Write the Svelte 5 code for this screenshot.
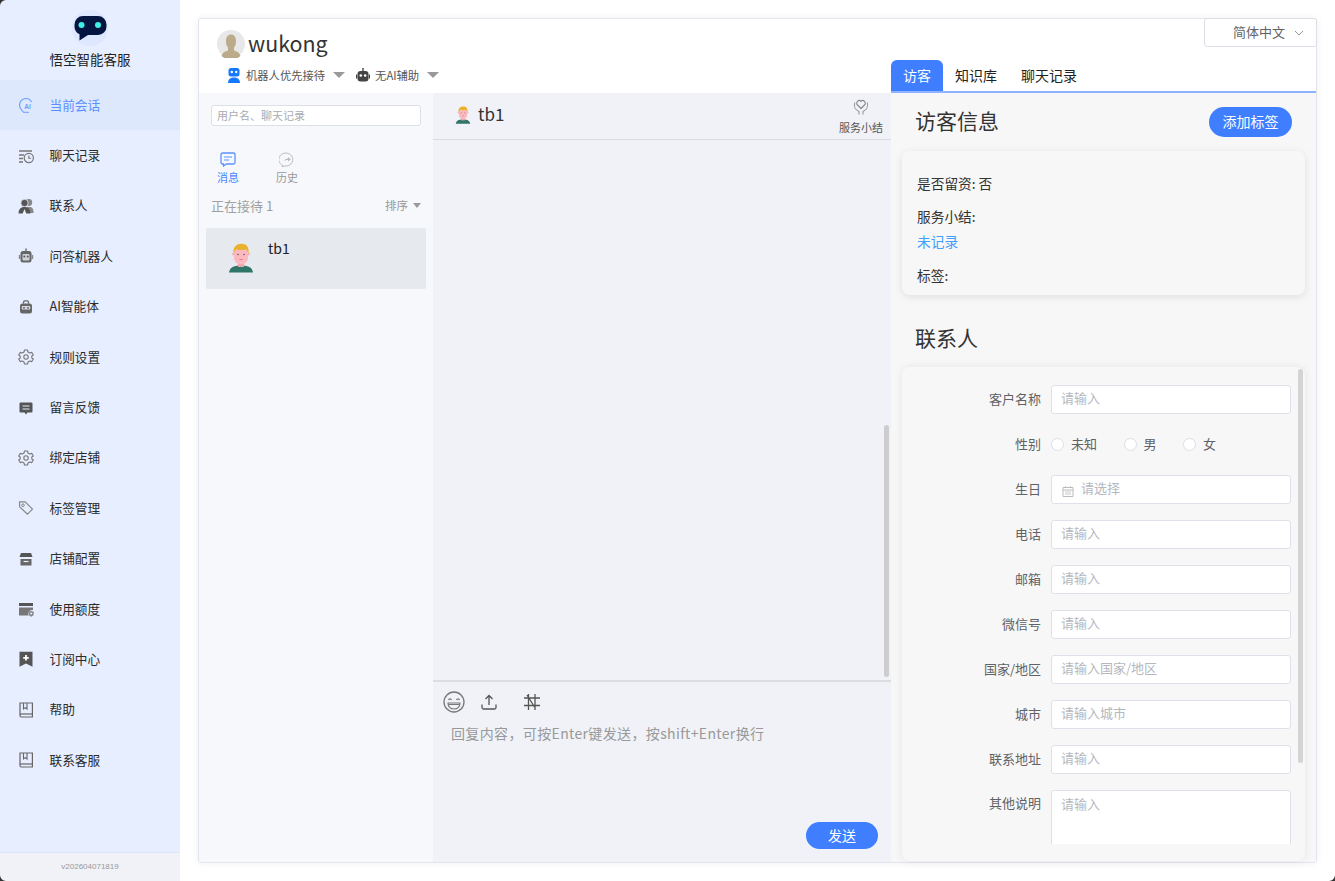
<script>
  const gear = `<path d="M6.5 1H9.5L10 3L11.8 4L13.8 3.4L15.3 6L13.8 7V9L15.3 10L13.8 12.6L11.8 12L10 13L9.5 15H6.5L6 13L4.2 12L2.2 12.6L.7 10L2.2 9V7L.7 6L2.2 3.4L4.2 4L6 3Z" fill="none" stroke="#777" stroke-width="1.1" stroke-linejoin="round"/><circle cx="8" cy="8" r="2.2" fill="none" stroke="#777" stroke-width="1.1"/>`;
  const book = `<path d="M2 1h12.4v14H3.4A1.6 1.6 0 0 1 2 13.4z" fill="none" stroke="#666" stroke-width="1.2"/><path d="M2 12h12.4" stroke="#666" stroke-width="1.2"/><path d="M5.5 1v6l1.8-1.4L9 7V1" fill="none" stroke="#666" stroke-width="1.1"/>`;

  const menu = [
    { name: '当前会话', active: true, icon: `<path d="M5 15c0-1.500-3.500-2.500-3.500-7A6.400 6.400 0 0 1 8 1.500c2.600 0 4.500 1.300 5.500 3.500" fill="none" stroke="#6f9dff" stroke-width="1.200"/><path d="M5 15.300h6" stroke="#6f9dff" stroke-width="1"/><text x="6.200" y="11.500" font-size="6.500" font-weight="700" font-family="Liberation Sans" fill="#6f9dff">AI</text>` },
    { name: '聊天记录', icon: `<path d="M1 3h13M1 7h5M1 10.500h4M1 14h4" stroke="#777" stroke-width="1.300"/><circle cx="10.800" cy="10" r="4.600" fill="none" stroke="#777" stroke-width="1.200"/><path d="M10.800 7.500v2.700h2.200" fill="none" stroke="#777" stroke-width="1.100"/>` },
    { name: '联系人', icon: `<circle cx="10.800" cy="4.500" r="3.400" fill="#888"/><path d="M9 9h3c2.500 0 3.600 2.500 3.600 6H9z" fill="#888"/><circle cx="6.500" cy="5" r="3.700" fill="#555" stroke="#e6eeff" stroke-width=".8"/><path d="M.6 15.500c0-4 1.800-6.500 5.900-6.500s5.900 2.500 5.900 6.500H8.300L6.500 11l-1.800 4.500z" fill="#555"/>` },
    { name: '问答机器人', icon: `<path d="M8 .6v2.400" stroke="#666" stroke-width="1.400"/><rect x="2.500" y="3" width="11" height="11.500" rx="2.500" fill="#666"/><rect x=".8" y="7" width="1.600" height="4" fill="#888"/><rect x="13.600" y="7" width="1.600" height="4" fill="#888"/><rect x="4.500" y="6" width="7" height="6.500" rx="1" fill="#ccd0da"/><circle cx="6.300" cy="8.400" r="1" fill="#555"/><circle cx="9.700" cy="8.400" r="1" fill="#555"/>` },
    { name: 'AI智能体', icon: `<path d="M5.500 4.500V3.200A1.500 1.500 0 0 1 7 1.800h2a1.500 1.500 0 0 1 1.500 1.400v1.300" fill="none" stroke="#666" stroke-width="1.300"/><rect x="2" y="4.500" width="12" height="10" rx="2.500" fill="#666"/><rect x="3.700" y="7" width="8.600" height="3.600" rx="1" fill="#d4d8e2"/><circle cx="6" cy="8.800" r=".9" fill="#555"/><circle cx="10" cy="8.800" r=".9" fill="#555"/>` },
    { name: '规则设置', icon: gear },
    { name: '留言反馈', icon: `<path d="M2.500 2.500h11a1 1 0 0 1 1 1v8a1 1 0 0 1-1 1H9.500L8 14.500 6.500 12.500h-4a1 1 0 0 1-1-1v-8a1 1 0 0 1 1-1z" fill="#555"/><path d="M4.500 6h7M4.500 9h7" stroke="#e6eeff" stroke-width="1.100"/>` },
    { name: '绑定店铺', icon: gear },
    { name: '标签管理', icon: `<path d="M1.500 1.800h5.700l7.300 7.400-5 5-7.800-7.300z" fill="none" stroke="#888" stroke-width="1.200" stroke-linejoin="round"/><circle cx="5" cy="5.200" r="1.300" fill="none" stroke="#888" stroke-width="1"/>` },
    { name: '店铺配置', icon: `<path d="M3 2h10l1.500 4h-13z" fill="#555"/><path d="M2.500 8h11v6.500h-11z" fill="#666"/><path d="M5.500 10.500h5" stroke="#e6eeff" stroke-width="1.200"/>` },
    { name: '使用额度', icon: `<path d="M1 2h14v3H1z" fill="#555"/><path d="M1 6.500h14V9a4 4 0 0 0-4.500 5.500H1z" fill="#777"/><path d="M13.200 9.800l2.500 1v2.400c0 1.200-1.300 2-2.500 2.500-1.200-.5-2.500-1.300-2.500-2.500v-2.400z" fill="#888"/><circle cx="13.200" cy="12.600" r="1" fill="#e6eeff"/>` },
    { name: '订阅中心', icon: `<path d="M1.500.8h13v15L8 12.500 1.500 15.800z" fill="#555"/><path d="M8 4v5.500M5.200 6.800h5.600" stroke="#fff" stroke-width="1.800"/>` },
    { name: '帮助', icon: book },
    { name: '联系客服', icon: book },
  ];

  const fields = [
    { label: '客户名称', ph: '请输入' },
    { label: '性别', radio: ['未知', '男', '女'] },
    { label: '生日', ph: '请选择', date: true },
    { label: '电话', ph: '请输入' },
    { label: '邮箱', ph: '请输入' },
    { label: '微信号', ph: '请输入' },
    { label: '国家/地区', ph: '请输入国家/地区' },
    { label: '城市', ph: '请输入城市' },
    { label: '联系地址', ph: '请输入' },
  ];
</script>

{#snippet person()}
  <svg viewBox="0 0 26 30" class="person" aria-hidden="true">
    <path d="M1 29.500c.6-4.500 4-7 12-7s11.400 2.500 12 7z" fill="#2f7568"/>
    <rect x="10" y="19" width="6" height="5" fill="#f0a5a8"/>
    <circle cx="5.500" cy="11" r="1.600" fill="#f9b3b8"/>
    <circle cx="20.500" cy="11" r="1.600" fill="#f9b3b8"/>
    <path d="M6 7h14v7.500c0 4-3 7-7 7s-7-3-7-7z" fill="#fbb8bf"/>
    <path d="M5.500 11C4.500 4 8.500.8 13.500.8s8 3.200 7 10.200c-.7-2.500-1.500-4-2.500-4.500-3 .8-6.500.8-9.500 0-1.500.7-2.500 2-3 4.500z" fill="#eab12c"/>
    <circle cx="10" cy="11.500" r=".7" fill="#444"/>
    <circle cx="16" cy="11.500" r=".7" fill="#444"/>
    <path d="M11.500 16.500h3" stroke="#c9727c" stroke-width=".8"/>
  </svg>
{/snippet}

{#snippet caret()}
  <span class="caret"></span>
{/snippet}

<div class="app">
  <aside class="sidebar">
    <div class="brand">
      <svg class="logo" viewBox="0 0 36 36" aria-hidden="true">
        <circle cx="18" cy="18" r="18" fill="#dde7fe"/>
        <path d="M11 6h15a8.500 8.500 0 0 1 8.500 8.500v2a8.500 8.500 0 0 1-8.500 8.500H16l-8.500 5.500V24.200A8.500 8.500 0 0 1 2.500 16.500v-2A8.500 8.500 0 0 1 11 6z" fill="#04163f"/>
        <circle cx="9.500" cy="15" r="3" fill="#3ff0e6"/>
        <circle cx="26" cy="15" r="3" fill="#3ff0e6"/>
      </svg>
      <div class="brand-name">悟空智能客服</div>
    </div>
    <nav class="menu">
      {#each menu as item}
        <div class="menu-item" class:active={item.active}>
          <svg viewBox="0 0 16 16" class="menu-icon" aria-hidden="true">{@html item.icon}</svg>
          <span>{item.name}</span>
        </div>
      {/each}
    </nav>
    <div class="version">v202604071819</div>
  </aside>

  <main class="main">
    <div class="card">
      <div class="lang">
        <span>简体中文</span>
        <svg viewBox="0 0 10 6" class="chev" aria-hidden="true"><path d="M1 1l4 4 4-4" fill="none" stroke="#999" stroke-width="1"/></svg>
      </div>

      <section class="workspace">
        <header class="head">
          <div class="user">
            <svg viewBox="0 0 28 28" class="user-avatar" aria-hidden="true">
              <circle cx="14" cy="14" r="14" fill="#e8e8e8"/>
              <path d="M4.500 26c1-3.500 3.500-4.500 6.500-5.500v-3c-1.500-1.500-2-3.500-2-6.500 0-4 2-6.500 5-6.500s5 2.500 5 6.500c0 3-.5 5-2 6.500v3c3 1 5.500 2 6.500 5.500a14 14 0 0 1-19 0z" fill="#bcab8b"/>
            </svg>
            <span class="user-name">wukong</span>
          </div>
          <div class="modes">
            <svg viewBox="0 0 14 15" class="mode-icon" aria-hidden="true">
              <rect x="1.500" y="0" width="11" height="8.500" rx="2.500" fill="#1677ff"/>
              <circle cx="4.800" cy="4" r="1.200" fill="#fff"/>
              <circle cx="9.200" cy="4" r="1.200" fill="#fff"/>
              <path d="M1 15c0-3 1.500-5.500 6-5.500s6 2.500 6 5.500z" fill="#1677ff"/>
            </svg>
            <span class="mode-text">机器人优先接待</span>
            {@render caret()}
            <svg viewBox="0 0 14 15" class="mode-icon second" aria-hidden="true">
              <path d="M7 0v3" stroke="#444" stroke-width="1.400"/>
              <rect x="1.500" y="3" width="11" height="10.500" rx="3" fill="#444"/>
              <rect x="0" y="6.500" width="1.200" height="4" fill="#444"/>
              <rect x="12.800" y="6.500" width="1.200" height="4" fill="#444"/>
              <circle cx="4.800" cy="7.500" r="1.300" fill="#fff"/>
              <circle cx="9.200" cy="7.500" r="1.300" fill="#fff"/>
            </svg>
            <span class="mode-text">无AI辅助</span>
            {@render caret()}
          </div>
        </header>

        <div class="panels">
          <div class="conv">
            <input class="search" placeholder="用户名、聊天记录" />
            <div class="conv-tabs">
              <div class="conv-tab on">
                <svg viewBox="0 0 16 15" aria-hidden="true">
                  <path d="M2.500 1h11A1.500 1.500 0 0 1 15 2.500v8a1.500 1.500 0 0 1-1.500 1.500H6.500L3.500 14v-2h-1A1.500 1.500 0 0 1 1 10.500v-8A1.500 1.500 0 0 1 2.500 1z" fill="none" stroke="#5b93ff" stroke-width="1.300"/>
                  <path d="M4 5h8M4 8h5" stroke="#5b93ff" stroke-width="1.200"/>
                </svg>
                <span>消息</span>
              </div>
              <div class="conv-tab">
                <svg viewBox="0 0 16 15" aria-hidden="true">
                  <path d="M4 13.500A7 6.500 0 1 1 6 14l-3 .6z" fill="none" stroke="#bbb" stroke-width="1"/>
                  <path d="M5 9.500c.5-2 2-3 4-3V5l2.800 2.400L9 9.500V8c-1.500 0-3 .4-4 1.500z" fill="#bbb"/>
                </svg>
                <span>历史</span>
              </div>
            </div>
            <div class="conv-status">
              <span class="waiting">正在接待 1</span>
              <span class="sort">排序 <span class="sort-caret"></span></span>
            </div>
            <div class="conv-item">
              <div class="conv-avatar">{@render person()}</div>
              <span class="conv-name">tb1</span>
            </div>
          </div>

          <div class="chat">
            <div class="chat-head">
              <div class="chat-avatar">{@render person()}</div>
              <span class="chat-name">tb1</span>
              <div class="summary">
                <svg viewBox="0 0 18 18" aria-hidden="true">
                  <path d="M9 11.500L5.500 8a2.600 2.600 0 0 1 0-3.700 2.500 2.500 0 0 1 3.500 0 2.500 2.500 0 0 1 3.500 0 2.600 2.600 0 0 1 0 3.700z" fill="none" stroke="#888" stroke-width="1.100" stroke-linejoin="round"/>
                  <path d="M2.800 5.500C1.500 9.500 3.500 13 7 14.500v3M15.200 5.500C16.500 9.500 14.500 13 11 14.500v3" fill="none" stroke="#999" stroke-width="1.100"/>
                </svg>
                <span>服务小结</span>
              </div>
            </div>
            <div class="messages">
              <div class="chat-scroll"></div>
            </div>
            <div class="composer">
              <div class="tools">
                <svg viewBox="0 0 22 22" class="t-emoji" aria-hidden="true">
                  <circle cx="11" cy="11" r="10" fill="none" stroke="#777" stroke-width="1.300"/>
                  <path d="M5.500 9c.5-1.500 2.500-1.500 3 0M13.500 9c.5-1.500 2.500-1.500 3 0" fill="none" stroke="#777" stroke-width="1.200"/>
                  <path d="M5 12h12c0 3.500-2.500 6-6 6s-6-2.500-6-6z" fill="none" stroke="#777" stroke-width="1.200"/>
                  <path d="M5.500 13.500h11" stroke="#777" stroke-width="1"/>
                </svg>
                <svg viewBox="0 0 16 16" class="t-upload" aria-hidden="true">
                  <path d="M8 11V1.500M4.500 5L8 1.500 11.500 5" fill="none" stroke="#555" stroke-width="1.300"/>
                  <path d="M1 10.500v3A1.500 1.500 0 0 0 2.500 15h11a1.500 1.500 0 0 0 1.500-1.500v-3" fill="none" stroke="#555" stroke-width="1.300"/>
                </svg>
                <svg viewBox="0 0 16 16" class="t-crop" aria-hidden="true">
                  <path d="M0 4h16M0 11.500h16M4.500 0v16M11 0v16M3 1l7.500 12" fill="none" stroke="#555" stroke-width="1.300"/>
                </svg>
              </div>
              <p class="reply-hint">回复内容，可按Enter键发送，按shift+Enter换行</p>
              <button class="send">发送</button>
            </div>
          </div>
        </div>
      </section>

      <section class="visitor">
        <div class="tabs">
          <span class="tab on">访客</span>
          <span class="tab">知识库</span>
          <span class="tab">聊天记录</span>
        </div>
        <div class="visitor-body">
          <div class="section-head">
            <h2>访客信息</h2>
            <button class="add-tag">添加标签</button>
          </div>
          <div class="info">
            <div class="info-line first">是否留资: 否</div>
            <div class="info-line second">服务小结:</div>
            <div class="info-line link">未记录</div>
            <div class="info-line last">标签:</div>
          </div>
          <h2 class="contact-title">联系人</h2>
          <div class="contact">
            <div class="form-scroll"></div>
            <div class="form">
              {#each fields as f}
                <div class="row">
                  <span class="label">{f.label}</span>
                  {#if f.radio}
                    <div class="radios">
                      {#each f.radio as r}
                        <span class="radio"><i></i><b>{r}</b></span>
                      {/each}
                    </div>
                  {:else if f.date}
                    <div class="date">
                      <svg viewBox="0 0 12 12" aria-hidden="true">
                        <path d="M1 2.500h10v9H1zM1 5h10" fill="none" stroke="#bbb" stroke-width="1"/>
                        <path d="M3.500 1v2M8.500 1v2M3 7h6M3 9h6" stroke="#bbb" stroke-width=".8"/>
                      </svg>
                      <input placeholder={f.ph} />
                    </div>
                  {:else}
                    <input class="text" placeholder={f.ph} />
                  {/if}
                </div>
              {/each}
              <div class="row area">
                <span class="label">其他说明</span>
                <textarea placeholder="请输入"></textarea>
              </div>
            </div>
          </div>
        </div>
      </section>
    </div>
  </main>

  <svg class="corner tl" viewBox="0 0 6 6" aria-hidden="true"><path d="M0 0h6a6 6 0 0 0-6 6z" fill="#333"/></svg>
  <svg class="corner bl" viewBox="0 0 6 6" aria-hidden="true"><path d="M0 0h6a6 6 0 0 0-6 6z" fill="#333"/></svg>
  <svg class="corner br" viewBox="0 0 6 6" aria-hidden="true"><path d="M0 0h6a6 6 0 0 0-6 6z" fill="#333"/></svg>
</div>

<style>
  :global(body) {
    margin: 0;
    font-family: "Noto Sans CJK SC", "Noto Sans", sans-serif;
    color: #333;
    background: #fff;
  }

  .app {
    position: relative;
    display: flex;
    height: 100vh;
    min-height: 881px;
    overflow: hidden;
  }

  .corner { position: absolute; width: 6px; height: 6px; }
  .corner.tl { left: 0; top: 0; }
  .corner.bl { left: 0; bottom: 0; transform: rotate(-90deg); }
  .corner.br { right: 0; bottom: 0; transform: rotate(180deg); }

  /* sidebar */
  .sidebar {
    width: 180px;
    flex-shrink: 0;
    display: flex;
    flex-direction: column;
    background: #e6eeff;
  }

  .brand {
    height: 80px;
    display: flex;
    flex-direction: column;
    align-items: center;
    padding-top: 10px;
    box-sizing: border-box;
  }

  .logo { width: 36px; height: 36px; display: block; }

  .brand-name {
    font-size: 13.5px;
    line-height: 20px;
    margin-top: 3px;
    color: #222;
  }

  .menu { flex: 1; }

  .menu-item {
    height: 50.4px;
    display: flex;
    align-items: center;
    padding-left: 18px;
    font-size: 12.7px;
    color: #2b2b2b;
  }

  .menu-item span { margin-top: -2px; }

  .menu-item.active { background: #dee8fd; color: #5b8fff; }

  .menu-icon { width: 16px; height: 16px; margin-right: 15.5px; flex-shrink: 0; }

  .version {
    height: 28px;
    border-top: 1px solid #dbe6fb;
    background: #f0f2f7;
    text-align: center;
    font: 8px/28px "Liberation Sans", sans-serif;
    color: #999;
  }

  /* card */
  .main {
    flex: 1;
    min-width: 0;
    padding: 18px;
  }

  .card {
    position: relative;
    display: flex;
    height: 845px;
    box-sizing: border-box;
    border: 1px solid #e2e5ee;
    border-radius: 3px;
    background: #fff;
    box-shadow: 0 0 8px rgba(0, 0, 0, .06);
  }

  .lang {
    position: absolute;
    top: -1px;
    right: -1px;
    width: 113px;
    height: 29px;
    box-sizing: border-box;
    display: flex;
    align-items: center;
    justify-content: flex-end;
    gap: 9px;
    padding-right: 12px;
    border: 1px solid #dcdfe6;
    border-radius: 3px;
    background: #fff;
    font-size: 13px;
    color: #606266;
  }

  .lang span { margin-top: -2px; }

  .chev { width: 10px; height: 6px; }

  .workspace {
    width: 692px;
    flex-shrink: 0;
    display: flex;
    flex-direction: column;
  }

  .head {
    height: 74px;
    padding: 11px 0 0 18px;
    box-sizing: border-box;
  }

  .user { display: flex; align-items: center; height: 28px; }

  .user-avatar { width: 28px; height: 28px; margin-right: 3px; }

  .user-name { font-size: 21.4px; line-height: 28px; color: #333; margin-top: -2px; }

  .modes {
    display: flex;
    align-items: center;
    height: 20px;
    margin-top: 7px;
    padding-left: 10px;
  }

  .mode-icon { width: 14px; height: 15px; margin-right: 5px; }
  .mode-icon.second { margin-left: 11px; margin-right: 5px; }

  .mode-text { font-size: 11.3px; color: #555; }

  .caret {
    width: 0;
    height: 0;
    margin-left: 8px;
    border-left: 6px solid transparent;
    border-right: 6px solid transparent;
    border-top: 6px solid #999;
  }

  .panels { flex: 1; display: flex; min-height: 0; }

  /* conversation list */
  .conv {
    width: 234px;
    flex-shrink: 0;
    background: #f6f8fb;
    padding: 12px 7px 0;
    box-sizing: border-box;
  }

  .search {
    display: block;
    width: 210px;
    height: 21px;
    margin-left: 5px;
    padding: 0 5px 2px;
    box-sizing: border-box;
    border: 1px solid #dcdfe6;
    border-radius: 3px;
    background: #fff;
    font: 11px "Noto Sans CJK SC", sans-serif;
    outline: none;
  }

  .search::placeholder { color: #a9acb3; }

  .conv-tabs { display: flex; margin: 26px 0 0 10px; }

  .conv-tab {
    display: flex;
    flex-direction: column;
    align-items: center;
    width: 24px;
    margin-right: 35px;
    font-size: 11px;
    line-height: 16px;
    color: #999;
  }

  .conv-tab svg { width: 16px; height: 15px; margin-bottom: 2px; }
  .conv-tab.on { color: #4a86ff; }

  .conv-status {
    display: flex;
    justify-content: space-between;
    align-items: center;
    margin: 10px 5px 0 5px;
    height: 20px;
  }

  .waiting { font-size: 13px; color: #a0a0a0; }

  .sort { font-size: 11.5px; color: #999; display: flex; align-items: center; gap: 5px; }

  .sort-caret {
    border-left: 4.500px solid transparent;
    border-right: 4.500px solid transparent;
    border-top: 5px solid #999;
  }

  .conv-item {
    display: flex;
    align-items: flex-start;
    height: 61px;
    margin-top: 13px;
    border-radius: 2px;
    background: #e6e9ed;
  }

  .conv-avatar { width: 26px; height: 30px; margin: 15px 14px 0 22px; }

  .person { display: block; width: 100%; height: 100%; }

  .conv-name { font-size: 14px; line-height: 20px; margin-top: 10px; color: #222; }

  /* chat */
  .chat {
    flex: 1;
    min-width: 0;
    display: flex;
    flex-direction: column;
    background: #f0f2f7;
  }

  .chat-head {
    height: 47px;
    box-sizing: border-box;
    display: flex;
    align-items: center;
    padding: 0 8px 2px 22px;
    border-bottom: 1px solid #d9dbe0;
  }

  .chat-avatar { width: 16px; height: 18px; margin-right: 7px; }

  .chat-name { flex: 1; font-size: 17px; color: #333; line-height: 24px; margin-top: -2px; }

  .summary {
    display: flex;
    flex-direction: column;
    align-items: center;
    font-size: 11px;
    line-height: 14px;
    color: #555;
  }

  .summary svg { width: 18px; height: 18px; margin-bottom: 5px; }

  .messages { flex: 1; position: relative; }

  .chat-scroll {
    position: absolute;
    right: 2px;
    bottom: 3px;
    width: 5px;
    height: 252px;
    border-radius: 3px;
    background: #cdcdcd;
  }

  .composer {
    height: 182px;
    box-sizing: border-box;
    border-top: 2px solid #dcdde0;
    position: relative;
    padding: 9px 10px 0;
  }

  .tools { display: flex; align-items: center; height: 21px; }

  .t-emoji { width: 22px; height: 22px; margin-right: 16px; }
  .t-upload { width: 16px; height: 16px; margin-right: 27px; }
  .t-crop { width: 16px; height: 16px; }

  .reply-hint {
    margin: 11px 0 0 8px;
    font-size: 14px;
    line-height: 20px;
    color: #999;
    letter-spacing: .36px;
  }

  .send {
    position: absolute;
    right: 13px;
    bottom: 13px;
    width: 72px;
    height: 27px;
    padding: 0 0 2px;
    border: 0;
    border-radius: 14px;
    background: #3e7eff;
    color: #fff;
    font: 14px "Noto Sans CJK SC", sans-serif;
  }

  /* visitor */
  .visitor {
    flex: 1;
    min-width: 0;
    display: flex;
    flex-direction: column;
    padding-top: 41px;
  }

  .tabs {
    display: flex;
    height: 33px;
    box-sizing: border-box;
    border-bottom: 2px solid #8cb4ff;
  }

  .tab {
    font-size: 14px;
    line-height: 30px;
    padding: 0 12px;
    color: #222;
  }

  .tab.on {
    width: 52px;
    box-sizing: border-box;
    border-radius: 6px 6px 0 0;
    background: #3e7eff;
    color: #fff;
  }

  .visitor-body {
    flex: 1;
    min-height: 0;
    background: #f7f7f7;
    padding: 0 11px;
  }

  .section-head {
    display: flex;
    align-items: center;
    justify-content: space-between;
    height: 58px;
    padding: 0 13px 0 13px;
  }

  h2 {
    margin: 0;
    font-size: 21px;
    font-weight: 400;
    color: #333;
  }

  .section-head h2 { margin-top: -4px; }

  .add-tag {
    width: 83px;
    height: 30px;
    padding: 0 0 2px;
    border: 0;
    border-radius: 15px;
    background: #3e7eff;
    color: #fff;
    font: 14px "Noto Sans CJK SC", sans-serif;
  }

  .info {
    height: 144px;
    box-sizing: border-box;
    padding: 0 15px;
    border-radius: 8px;
    background: #f7f7f7;
    box-shadow: 0 2px 8px rgba(0, 0, 0, .1);
    font-size: 13.7px;
    color: #333;
    overflow: hidden;
  }

  .info-line { line-height: 20px; }
  .info-line.first { margin-top: 22px; }
  .info-line.second { margin-top: 13px; }
  .info-line.link { margin-top: 5px; color: #409eff; }
  .info-line.last { margin-top: 14px; }

  .contact-title { margin: 26px 0 14px 13px; line-height: 32px; }

  .contact {
    position: relative;
    height: 494px;
    box-sizing: border-box;
    padding: 18px 0 17px;
    border-radius: 8px;
    background: #f7f7f7;
    box-shadow: 0 0 8px rgba(0, 0, 0, .08);
  }

  .form-scroll {
    position: absolute;
    right: 2px;
    top: 2px;
    width: 5px;
    height: 394px;
    border-radius: 3px;
    background: #d4d4d4;
  }

  .form { height: 100%; overflow: hidden; }

  .row {
    display: flex;
    align-items: center;
    height: 29px;
    margin-bottom: 16px;
    font-size: 13px;
  }

  .row.area { align-items: flex-start; height: 80px; margin: 0; }

  .label {
    width: 139px;
    flex-shrink: 0;
    margin-right: 10px;
    margin-top: -2px;
    text-align: right;
    color: #606266;
    line-height: 27px;
  }

  .row.area .label { line-height: 26px; margin-top: 0; }

  input.text, .date, textarea {
    width: 240px;
    height: 29px;
    box-sizing: border-box;
    border: 1px solid #dfe1ea;
    border-radius: 3px;
    background: #fff;
    font: 13px "Noto Sans CJK SC", sans-serif;
    outline: none;
  }

  input.text { padding: 0 9px 5px; }
  input::placeholder, textarea::placeholder { color: #b5b8c0; }

  .date { display: flex; align-items: center; padding-left: 10px; }
  .date svg { width: 12px; height: 12px; margin: 2px 7px 0 0; flex-shrink: 0; }
  .date input {
    flex: 1;
    min-width: 0;
    padding: 0 0 5px;
    border: 0;
    background: none;
    font: 13px "Noto Sans CJK SC", sans-serif;
    outline: none;
  }

  textarea { height: 80px; padding: 3px 9px; resize: none; line-height: 20px; }

  .radios { display: flex; color: #606266; }

  .radio { display: flex; align-items: center; margin-right: 26.500px; line-height: 29px; }

  .radio b { font-weight: 400; margin-top: -2px; }

  .radio i {
    width: 13px;
    height: 13px;
    box-sizing: border-box;
    margin-right: 7px;
    border: 1px solid #dcdfe6;
    border-radius: 50%;
    background: #fff;
  }
</style>
